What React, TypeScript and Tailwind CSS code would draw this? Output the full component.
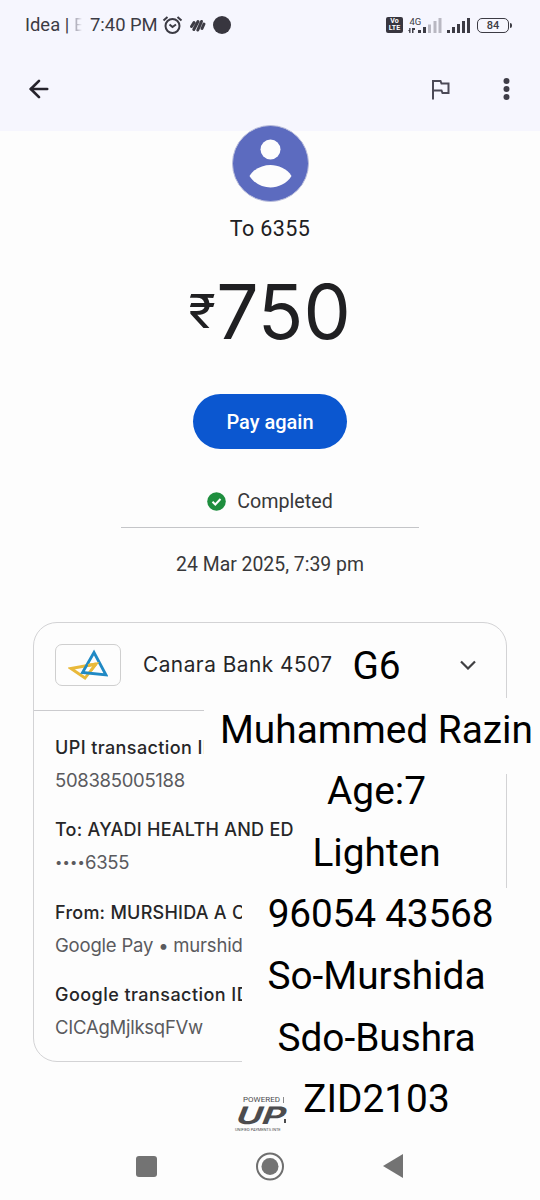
import { ArrowLeft } from "lucide-react";

const details = [
  { label: "UPI transaction ID", labelCls: "tracking-[0.400px]", value: "508385005188", valueCls: "tracking-[-0.300px]" },
  { label: "To: AYADI HEALTH AND ED", labelCls: "tracking-[0.250px]", masked: true, value: "6355", valueCls: "tracking-[-0.300px]" },
  { label: "From: MURSHIDA A C", labelCls: "tracking-[0.250px]", value: "Google Pay • murshid", valueCls: "tracking-[-0.200px]" },
  { label: "Google transaction ID", labelCls: "tracking-[0.450px]", value: "CICAgMjlksqFVw", valueCls: "tracking-[-0.250px]" },
];

const notes = ["Muhammed Razin", "Age:7", "Lighten", "96054 43568", "So-Murshida", "Sdo-Bushra", "ZID2103"];

function StatusBar() {
  return (
    <div className="flex h-[50px] items-center pl-[25px] pr-[28px] text-[18.400px] text-[#3c3b44]">
      <span className="w-[49px] whitespace-nowrap">Idea |</span>
      <span className="w-4 bg-gradient-to-r from-[#b5b4c0] from-20% to-transparent to-50% bg-clip-text text-transparent">E</span>
      <span className="w-[72px] whitespace-nowrap">7:40 PM</span>
      <svg className="h-[21px] w-[21px]" viewBox="0 0 21 21" fill="none" stroke="#3c3b44" strokeWidth="2">
        <circle cx="10.5" cy="11" r="7" />
        <path d="M1.5 5.5 5.5 2M19.5 5.5 15.5 2M7.5 9.500l3 2.500 3.500-2.500" />
      </svg>
      <svg className="ml-[6px] h-[15px] w-[17px]" viewBox="0 0 17 15" stroke="#3c3b44" strokeWidth="3" strokeLinecap="round" fill="none">
        <path d="M2.500 8.500 5 4.500M4.800 11.500 9 3.500M8.800 12 12.500 3.500M13 10.500l2-4.500" />
      </svg>
      <span className="ml-[7px] h-[18px] w-[18px] rounded-full bg-[#38363f]" />

      <div className="ml-auto flex items-center">
        <div className="flex h-[16px] w-[17px] flex-col items-center justify-center rounded-[2px] bg-[#38363f] text-[7px] font-bold leading-[7px] text-white">
          <span>Vo</span>
          <span>LTE</span>
        </div>
        <svg className="ml-[5px] h-[18px] w-[35px]" viewBox="0 0 35 18" fill="#3c3b44">
          <text x="1.500" y="8.500" fontSize="9.500">4G</text>
          <path d="M0 14h1.200v-2h1.300v5H1.200v-1.500zM4 12h3v2H5.500v3H4zM10 14h3v3h-3zM15 11h3v6h-3z" />
          <path fill="#b9b8c2" d="M20 8.500h3V17h-3zM25.500 5h3v12h-3zM30.500 2h3v15h-3z" />
        </svg>
        <svg className="ml-[3px] h-[18px] w-[26px]" viewBox="0 0 26 18" fill="#3c3b44">
          <path d="M1 14h3v3H1zM6 11h3v6H6zM11 8h3v9h-3zM16 5h3v12h-3zM21 2h3v15h-3z" />
        </svg>
        <div className="ml-[5px] flex h-[15px] w-[32px] items-center justify-center rounded-[5px] border-[1.500px] border-[#3c3b44] text-[11px] font-medium leading-none">84</div>
        <span className="ml-px h-[5px] w-[2px] rounded-r bg-[#3c3b44]" />
      </div>
    </div>
  );
}

function AppBar() {
  return (
    <div className="flex h-[81px] items-center pl-[25px] pr-[30px] pb-[3px] text-[#26232c]">
      <ArrowLeft className="h-[28px] w-[28px]" strokeWidth={2.300} />
      <svg className="ml-auto h-[21px] w-[19px]" viewBox="0 0 19 21" fill="none" stroke="#4b4956" strokeWidth="2">
        <path d="M2 20.500V2h7.500l1 2.500H17.500v9.500H11.500l-1-2.500H2" />
      </svg>
      <svg className="ml-[53px] h-[24px] w-[7px]" viewBox="0 0 7 24" fill="#3f3d48">
        <circle cx="3.500" cy="4" r="3" />
        <circle cx="3.500" cy="12" r="3" />
        <circle cx="3.500" cy="20" r="3" />
      </svg>
    </div>
  );
}

function BankLogo() {
  return (
    <div className="flex h-[42px] w-[66px] items-center justify-center rounded-[7px] border border-[#cfcfcf]">
      <svg className="h-[32px] w-[40px]" viewBox="0 0 40 32" fill="none" strokeWidth="2.800">
        <path stroke="#e9b93a" d="M28 15 3 19.500 17 29 28 15" />
        <path stroke="#2089c4" d="M26 3.500 38 26 14.500 23.500z" />
        <path stroke="#e9b93a" d="M20 16.500 28 15l-5 6.400" />
      </svg>
    </div>
  );
}

export default function App() {
  return (
    <div className="relative flex h-[1200px] w-[540px] flex-col overflow-hidden bg-[#fdfdfd] font-['Roboto',sans-serif]">
      <header className="h-[131px] flex-none bg-[#f6f6fe]">
        <StatusBar />
        <AppBar />
      </header>

      {/* Recipient and amount */}
      <section className="-mt-[6px] flex flex-none flex-col items-center text-[#202022]">
        <svg className="h-[77px] w-[77px]" viewBox="0 0 77 77">
          <circle cx="38.500" cy="38.500" r="38" fill="#5c6bbf" stroke="#b9bddb" />
          <circle cx="38.500" cy="24.500" r="10" fill="#fdfdfd" />
          <path fill="#fdfdfd" d="M17.500 51C22 43.500 31 40 38.500 40S55 43.500 59.500 51C55 58.500 46 62.500 38.500 62.500S22 58.500 17.500 51z" />
        </svg>
        <p className="mt-[12px] text-[21.500px] leading-[30px] tracking-[0.400px]">To 6355</p>
        <div className="mt-[26px] flex h-[82px] items-center pl-[2px] font-['Inter',sans-serif]">
          <span className="origin-right scale-x-[1.100] pb-[1px] text-[46px] leading-none">₹</span>
          <span className="text-[75px] leading-none tracking-[0px]">750</span>
        </div>
        <button className="mt-[42px] h-[55px] w-[154px] rounded-full bg-[#0b57d0] text-[20px] font-medium text-white">Pay again</button>
        <div className="mt-[37px] flex h-[31px] items-center gap-[11px]">
          <svg className="h-[19px] w-[19px]" viewBox="0 0 19 19">
            <circle cx="9.500" cy="9.500" r="9.300" fill="#1e8e3e" />
            <path d="M5.500 9.800 8.300 12.500 13.500 7" fill="none" stroke="#fff" strokeWidth="2" />
          </svg>
          <span className="pt-px text-[19.700px] text-[#38383a]">Completed</span>
        </div>
        <div className="mt-[10px] h-px w-[298px] bg-[#c4c5c8]" />
        <p className="mt-[22px] text-[19.400px] leading-[30px] text-[#38383a]">24 Mar 2025, 7:39 pm</p>
      </section>

      {/* Transaction card */}
      <section className="mx-[33px] mt-[42px] h-[440px] flex-none rounded-[24px] border-[1.500px] border-[#d3d3d5] font-['Inter',sans-serif]">
        <div className="flex h-[88px] items-center border-b border-[#cbcbce] pb-[3px] pl-[21px] pr-[29px]">
          <BankLogo />
          <span className="ml-[22px] text-[20.800px] tracking-[0.500px] text-[#262628]">Canara Bank 4507</span>
          <svg className="ml-auto h-[10px] w-[18px]" viewBox="0 0 18 10" fill="none" stroke="#3f3f42" strokeWidth="2.200">
            <path d="M2 1.500 9 8.500 16 1.500" />
          </svg>
        </div>
        <div className="flex flex-col gap-[16.500px] pl-[21px] pt-[19.500px]">
          {details.map(d => (
            <div key={d.label} className="whitespace-nowrap leading-[33px]">
              <p className={`text-[18px] font-medium text-[#262628] ${d.labelCls}`}>{d.label}</p>
              <p className={`flex text-[18.500px] text-[#5a5a5e] ${d.valueCls}`}>
                {d.masked && <span className="text-[13px] tracking-[0.200px]">••••</span>}
                {d.value}
              </p>
            </div>
          ))}
        </div>
      </section>

      {/* UPI mark */}
      <div className="ml-[235px] mt-[33px] w-[68px] flex-none whitespace-nowrap text-[#4c4c4e]">
        <div className="flex h-[9px] items-center gap-[3px] pl-[8px] text-[8px] leading-[9px]">
          <span>POWERED</span>
          <span className="h-[6px] w-px bg-[#8a8a8c]" />
        </div>
        <div className="flex h-[23px] items-end">
          <span className="w-[49px] origin-bottom-left -skew-x-6 scale-x-[1.480] font-['Inter',sans-serif] text-[24px] font-bold italic leading-[23px]">UP</span>
          <span className="mb-[4px] h-[4px] w-[2px] bg-[#4c4c4e]" />
        </div>
        <p className="text-[4px] leading-[5px]">UNIFIED PAYMENTS INTE</p>
      </div>

      {/* Blank patches behind the notes */}
      <div className="absolute left-[204px] top-[698px] h-[76px] w-[336px] bg-[#fdfdfd]" />
      <div className="absolute left-[296px] top-[774px] h-[114px] w-[206px] bg-[#fdfdfd]" />
      <div className="absolute left-[242px] top-[888px] h-[187px] w-[298px] bg-[#fdfdfd]" />

      <div className="absolute left-[213px] top-[635px] flex w-[327px] flex-col items-center text-[38.800px] leading-[61.600px] text-black">
        <p className="mb-[2px]">G6</p>
        {notes.map(n => (
          <p key={n} className={n.startsWith("96") ? "whitespace-nowrap pl-[8px] tracking-[-0.200px]" : "whitespace-nowrap"}>{n}</p>
        ))}
      </div>

      {/* System navigation */}
      <nav className="absolute inset-x-0 bottom-0 flex h-[68px] items-center justify-between pl-[136px] pr-[137px]">
        <span className="h-[21px] w-[21px] rounded-[3px] bg-[#737373]" />
        <svg className="h-[29px] w-[29px]" viewBox="0 0 29 29">
          <circle cx="14" cy="14.500" r="13" fill="none" stroke="#6f6f6f" strokeWidth="2" />
          <circle cx="14" cy="14.500" r="8.500" fill="#737373" />
        </svg>
        <svg className="h-[24px] w-[20px]" viewBox="0 0 20 24" fill="#737373">
          <path d="M0 12 20 0v24z" />
        </svg>
      </nav>
    </div>
  );
}
